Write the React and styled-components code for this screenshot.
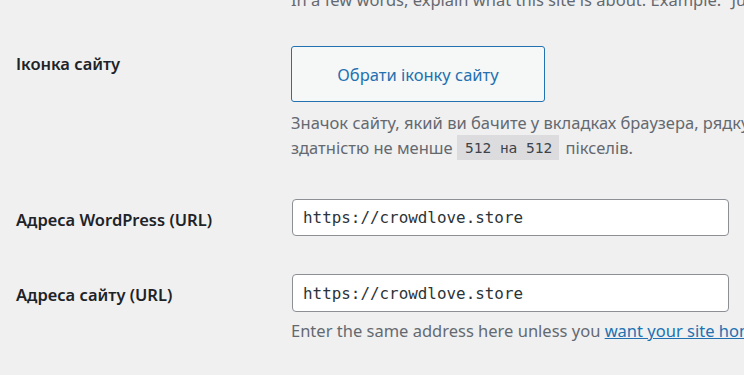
import styled, { createGlobalStyle } from "styled-components";

const GlobalStyle = createGlobalStyle`
  body {
    margin: 0;
    background: #f0f0f1;
    font-family: "Noto Sans", "Open Sans", sans-serif;
    color: #3c434a;
  }
`;

const Page = styled.div`
  width: 744px;
  height: 375px;
  overflow: hidden;
  box-sizing: border-box;
  padding-left: 16px;
`;

const Row = styled.div`
  display: grid;
  grid-template-columns: 275px 1fr;
  padding-top: ${(p) => p.$top ?? 19}px;
  padding-bottom: ${(p) => p.$bottom ?? 19}px;
  margin-top: ${(p) => p.$shift ?? 0}px;
`;

const Label = styled.div`
  font-size: 16.5px;
  font-weight: 600;
  line-height: 22px;
  color: #1d2327;
  padding-top: ${(p) => p.$offset ?? 10}px;
  white-space: nowrap;
`;

const Field = styled.div`
  min-width: 0;
`;

const Description = styled.p`
  margin: ${(p) => p.$gap ?? 0}px 0 0;
  font-size: 16.5px;
  line-height: 25px;
  color: #646970;
  white-space: nowrap;
`;

const HeroButton = styled.button`
  width: 254px;
  height: 56px;
  border: 1px solid #2271b1;
  border-radius: 3px;
  background: #f6f7f7;
  color: #2271b1;
  font-family: inherit;
  font-size: 16.5px;
  cursor: pointer;
`;

const Code = styled.code`
  display: inline-block;
  margin: 0 2px 0 0;
  padding: 0 7px 0 8px;
  height: 25px;
  line-height: 26px;
  vertical-align: top;
  background: #dcdcde;
  color: #3c434a;
  font-family: "DejaVu Sans Mono", "Liberation Mono", monospace;
  font-size: 14.5px;
`;

const UrlInput = styled.input`
  display: block;
  box-sizing: border-box;
  width: 437px;
  height: ${(p) => p.$h ?? 37}px;
  margin-left: 1px;
  padding: 0 10px;
  border: 1px solid #8c8f94;
  border-radius: 4px;
  background: #fff;
  color: #2c3338;
  font-family: "DejaVu Sans Mono", "Liberation Mono", monospace;
  font-size: 15.9px;
  outline: none;
`;

const Link = styled.a`
  color: #2271b1;
  text-decoration: underline;
`;

export default function App() {
  return (
    <>
      <GlobalStyle />
      <Page>
        <Row $top={0} $shift={-13}>
          <div />
          <Field>
            <Description>
              In a few words, explain what this site is about. Example: “Just another WordPress site.”
            </Description>
          </Field>
        </Row>
        <Row $top={15} $bottom={20}>
          <Label $offset={7}>Іконка сайту</Label>
          <Field>
            <HeroButton type="button">Обрати іконку сайту</HeroButton>
            <Description $gap={8}>
              Значок сайту, який ви бачите у вкладках браузера, рядку закладок та в мобільних застосунках WordPress.
              <br />
              здатністю не менше <Code>512 на 512</Code> пікселів.
            </Description>
          </Field>
        </Row>
        <Row>
          <Label>Адреса WordPress (URL)</Label>
          <Field>
            <UrlInput type="url" defaultValue="https://crowdlove.store" />
          </Field>
        </Row>
        <Row>
          <Label>Адреса сайту (URL)</Label>
          <Field>
            <UrlInput type="url" $h={38} defaultValue="https://crowdlove.store" />
            <Description $gap={6}>
              Enter the same address here unless you{" "}
              <Link href="#">want your site home page to be different from your WordPress installation directory</Link>.
            </Description>
          </Field>
        </Row>
      </Page>
    </>
  );
}
